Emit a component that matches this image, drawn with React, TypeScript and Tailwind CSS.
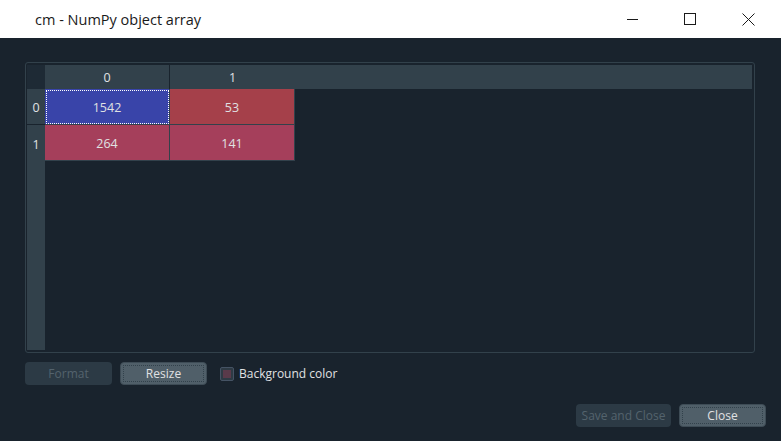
import React from 'react'

const cells = [
  [
    { v: '1542', bg: 'bg-[#3944a9]', focus: true },
    { v: '53', bg: 'bg-[#a5404a]', focus: false },
  ],
  [
    { v: '264', bg: 'bg-[#a53f5b]', focus: false },
    { v: '141', bg: 'bg-[#a53f5b]', focus: false },
  ],
]

const App = () => {
  return (
    <div className="w-[781px] h-[441px] bg-[#19232d] flex flex-col overflow-hidden font-['Open_Sans',sans-serif] text-[#e0e1e3]">
      {/* Title bar */}
      <div className="h-[38px] bg-white flex items-center shrink-0">
        <span className="ml-[35px] pt-[1px] text-[14.5px] text-[#1a1a1a] font-['Open_Sans',sans-serif]">cm - NumPy object array</span>
        <div className="ml-auto flex items-center h-full">
          <div className="w-[58px] h-full flex items-center justify-center">
            <svg width="12" height="12" viewBox="0 0 12 12"><path d="M1 6.5h11" stroke="#1a1a1a" strokeWidth="1" /></svg>
          </div>
          <div className="w-[58px] h-full flex items-center justify-center">
            <svg width="12" height="12" viewBox="0 0 12 12"><rect x="0.5" y="0.5" width="11" height="11" fill="none" stroke="#1a1a1a" strokeWidth="1" /></svg>
          </div>
          <div className="w-[58px] h-full flex items-center justify-center mr-[4px]">
            <svg width="13" height="13" viewBox="0 0 13 13"><path d="M0.5 0.5l12 12M12.5 0.5l-12 12" stroke="#1a1a1a" strokeWidth="1" /></svg>
          </div>
        </div>
      </div>

      {/* Table frame */}
      <div className="ml-[25px] mt-[24px] w-[730px] h-[291px] border border-[#32414b] rounded-[3px] pt-[2px] pl-[1px] pr-[2px] flex flex-col">
        <div className="flex h-[24px] shrink-0">
          <div className="w-[18px] bg-[#1e2a35]" />
          <div className="flex-1 flex bg-[#32414b] text-[12.5px]">
            <div className="w-[125px] pt-[3px] border-r border-[#19232d] flex items-center justify-center">0</div>
            <div className="w-[125px] pt-[3px] flex items-center justify-center">1</div>
          </div>
        </div>
        <div className="flex flex-1 min-h-0">
          <div className="w-[18px] bg-[#32414b] flex flex-col text-[12.5px] mb-[2px]">
            <div className="h-[36px] pt-[4px] border-b border-[#19232d] flex items-center justify-center">0</div>
            <div className="h-[36px] pt-[4px] flex items-center justify-center">1</div>
          </div>
          <div className="flex flex-col">
            {cells.map((row, i) => (
              <div key={i} className="flex">
                {row.map((c, j) => (
                  <div
                    key={j}
                    className={`${c.bg} w-[125px] h-[36px] pt-[4px] flex items-center justify-center text-[12.5px] border-r border-b border-[#32414b] ${c.focus ? 'outline-dotted outline-1 outline-white -outline-offset-2' : ''}`}
                  >
                    {c.v}
                  </div>
                ))}
              </div>
            ))}
          </div>
        </div>
      </div>

      {/* Controls row */}
      <div className="flex items-center ml-[25px] mt-[9px] h-[23px] text-[12px]">
        <div className="w-[87px] h-[23px] rounded-[4px] bg-[#2c3a45] text-[#54636d] flex items-center justify-center">Format</div>
        <div className="ml-[8px] w-[87px] h-[23px] rounded-[4px] bg-[#505f69] border border-[#3e4c56] text-[#e0e1e3] flex items-center justify-center outline-dotted outline-1 outline-[#32414b] -outline-offset-4">Resize</div>
        <div className="ml-[13px] w-[14px] h-[14px] rounded-[2px] border border-[#455364] bg-[#2e3a44] flex items-center justify-center">
          <div className="w-[8px] h-[8px] bg-[#5a3a4a]" />
        </div>
        <span className="ml-[5px] text-[12px] text-[#e0e1e3]">Background color</span>
      </div>

      {/* Bottom buttons */}
      <div className="flex justify-end mt-[19px] mr-[15px] text-[12px]">
        <div className="w-[95px] h-[23px] rounded-[4px] bg-[#2c3a45] text-[#54636d] flex items-center justify-center">Save and Close</div>
        <div className="ml-[8px] w-[87px] h-[23px] rounded-[4px] bg-[#505f69] border border-[#3e4c56] text-[#e0e1e3] flex items-center justify-center outline-dotted outline-1 outline-[#32414b] -outline-offset-4">Close</div>
      </div>
    </div>
  )
}

export default App
